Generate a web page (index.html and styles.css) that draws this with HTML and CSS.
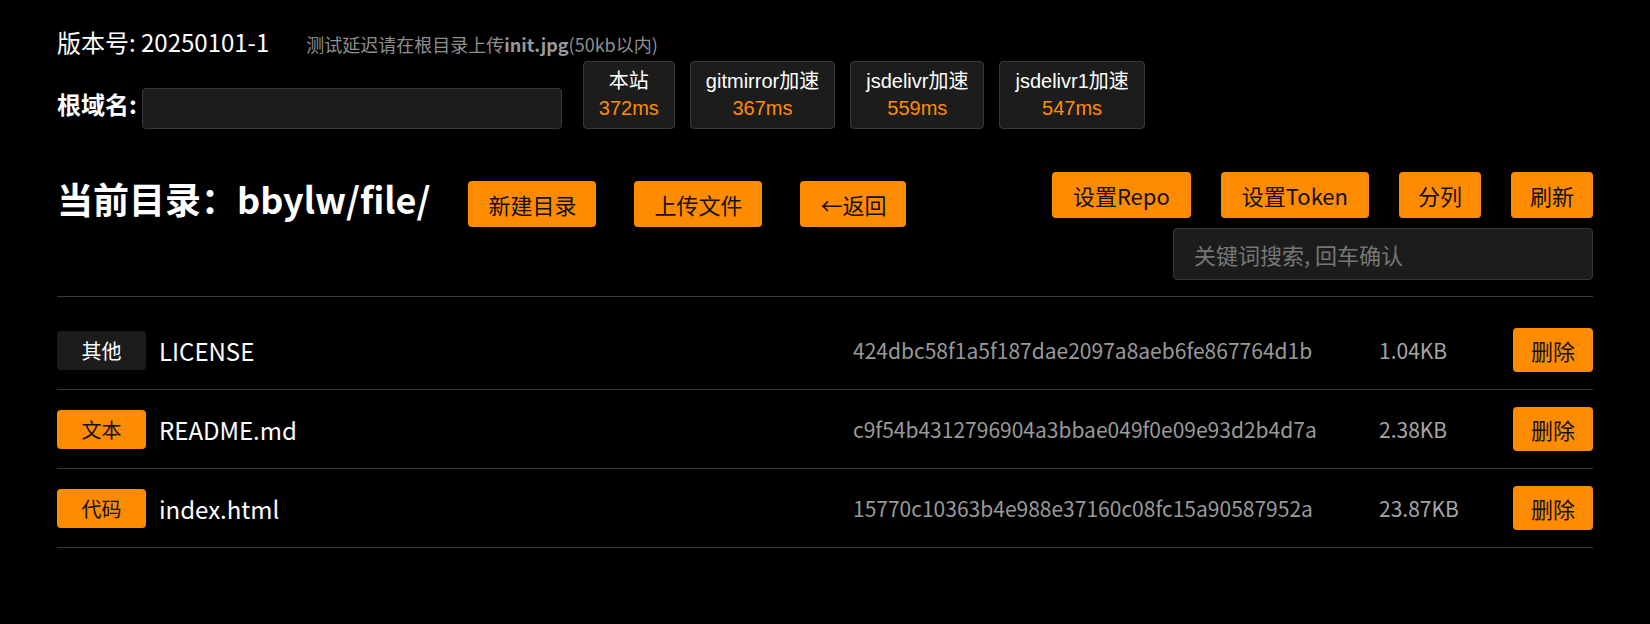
FILE: index.html
```html
<!DOCTYPE html>
<html lang="zh-CN">
<head>
<meta charset="utf-8">
<title>文件管理</title>
<link rel="stylesheet" href="styles.css">
</head>
<body>
<div class="page">
  <div class="version-line">
    <span class="version">版本号: 20250101-1</span><span class="hint">测试延迟请在根目录上传<b>init.jpg</b>(50kb以内)</span>
  </div>
  <div class="domain-row">
    <label class="domain-label">根域名:</label>
    <input class="domain-input" type="text">
    <div class="cdn-list">
      <div class="cdn"><div class="cdn-name">本站</div><div class="cdn-ms">372ms</div></div>
      <div class="cdn"><div class="cdn-name">gitmirror加速</div><div class="cdn-ms">367ms</div></div>
      <div class="cdn"><div class="cdn-name">jsdelivr加速</div><div class="cdn-ms">559ms</div></div>
      <div class="cdn"><div class="cdn-name">jsdelivr1加速</div><div class="cdn-ms">547ms</div></div>
    </div>
  </div>
  <div class="toolbar">
    <div class="toolbar-left">
      <h1 class="path">当前目录：bbylw/file/</h1>
      <button class="btn">新建目录</button>
      <button class="btn">上传文件</button>
      <button class="btn">←返回</button>
    </div>
    <div class="toolbar-right">
      <div class="btn-row">
        <button class="btn btn-wide">设置Repo</button>
        <button class="btn btn-wide">设置Token</button>
        <button class="btn">分列</button>
        <button class="btn">刷新</button>
      </div>
      <input class="search" type="text" placeholder="关键词搜索, 回车确认">
    </div>
  </div>
  <hr class="divider">
  <ul class="files">
    <li class="file">
      <span class="tag tag-other">其他</span>
      <span class="name">LICENSE</span>
      <span class="sha">424dbc58f1a5f187dae2097a8aeb6fe867764d1b</span>
      <span class="size">1.04KB</span>
      <button class="btn btn-del">删除</button>
    </li>
    <li class="file">
      <span class="tag">文本</span>
      <span class="name">README.md</span>
      <span class="sha">c9f54b4312796904a3bbae049f0e09e93d2b4d7a</span>
      <span class="size">2.38KB</span>
      <button class="btn btn-del">删除</button>
    </li>
    <li class="file">
      <span class="tag">代码</span>
      <span class="name">index.html</span>
      <span class="sha">15770c10363b4e988e37160c08fc15a90587952a</span>
      <span class="size">23.87KB</span>
      <button class="btn btn-del">删除</button>
    </li>
  </ul>
</div>
</body>
</html>
```

FILE: styles.css
```css
body {
  margin: 0;
  background: #000;
  color: #fff;
  font-family: "Noto Sans CJK SC", "Noto Sans", sans-serif;
}

.page {
  width: 1536px;
  margin: 0 auto;
  padding-top: 25px;
}

.version-line {
  font-size: 24px;
  line-height: 34px;
  white-space: nowrap;
}

.hint {
  font-size: 18px;
  color: #8f8f8f;
  margin-left: 37px;
}

.hint b {
  color: #9a9a9a;
}

.domain-row {
  display: flex;
  align-items: flex-end;
}

.domain-label {
  font-size: 24px;
  font-weight: 700;
  line-height: 35px;
  margin-bottom: 8px;
}

.domain-input {
  width: 420px;
  height: 41px;
  box-sizing: border-box;
  margin-left: 5px;
  background: #1c1c1c;
  border: 1px solid #383838;
  border-radius: 4px;
  color: #fff;
  font-family: inherit;
  font-size: 18px;
  padding: 0 10px;
}

.cdn-list {
  display: flex;
  gap: 15px;
  margin-left: 21px;
}

.cdn {
  background: #1c1c1c;
  border: 1px solid #383838;
  border-radius: 4px;
  padding: 6px 15px;
  font-family: "Liberation Sans", "Noto Sans CJK SC", sans-serif;
  font-size: 20px;
  line-height: 27px;
  text-align: center;
}

.cdn-ms {
  color: #ff8c00;
}

.toolbar {
  display: flex;
  justify-content: space-between;
  align-items: flex-start;
  margin-top: 43px;
}

.toolbar-left {
  display: flex;
  align-items: baseline;
  gap: 38px;
}

.path {
  margin: 0;
  font-size: 36px;
  font-weight: 700;
  line-height: normal;
}

.btn {
  background: #ff8c00;
  color: #111;
  border: none;
  border-radius: 4px;
  font-family: inherit;
  font-size: 22px;
  line-height: normal;
  padding: 7px 20px;
  cursor: pointer;
}

.toolbar-right {
  display: flex;
  flex-direction: column;
  align-items: flex-end;
}

.btn-row {
  display: flex;
  gap: 30px;
}

.btn-row .btn {
  padding: 7px 19px;
}

.btn-row .btn-wide {
  padding: 7px 21px;
}

.search {
  width: 420px;
  height: 52px;
  margin-top: 10px;
  box-sizing: border-box;
  background: #1c1c1c;
  border: 1px solid #383838;
  border-radius: 4px;
  padding: 0 20px;
  font-family: inherit;
  font-size: 22px;
  color: #fff;
}

.search::placeholder {
  color: #777;
}

.divider {
  border: none;
  border-top: 1px solid #383838;
  margin: 16px 0 0;
}

.files {
  list-style: none;
  margin: 14px 0 0;
  padding: 0;
}

.file {
  display: flex;
  align-items: center;
  padding: 17px 0;
  border-bottom: 1px solid #383838;
}

.tag {
  width: 89px;
  padding: 5px 0;
  text-align: center;
  font-size: 20px;
  border-radius: 4px;
  margin-right: 13px;
  background: #ff8c00;
  color: #111;
}

.tag-other {
  background: #1c1c1c;
  color: #fff;
}

.name {
  flex: 1;
  font-size: 24px;
}

.sha {
  width: 526px;
  font-size: 21px;
  color: #999;
}

.size {
  width: 134px;
  font-size: 21px;
  color: #a6a6a6;
}

.btn-del {
  font-size: 22px;
  padding: 6px 18px;
}
```
